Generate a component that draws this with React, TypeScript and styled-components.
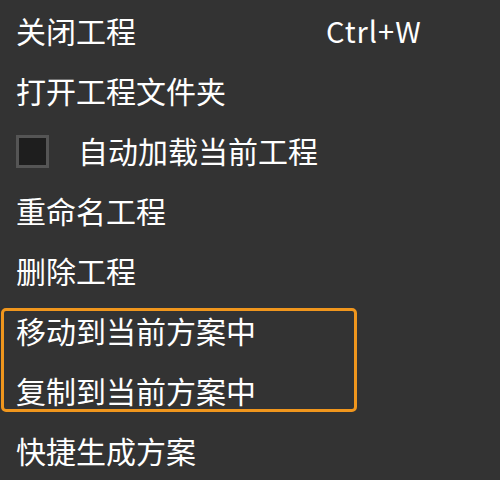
import React from "react"
import styled, { createGlobalStyle } from "styled-components"

const GlobalStyle = createGlobalStyle`
  html, body {
    margin: 0;
    padding: 0;
    background: #333333;
  }
`

const Menu = styled.div`
  width: 500px;
  height: 480px;
  overflow: hidden;
  padding-top: 1px;
  box-sizing: border-box;
  background: #333333;
  color: #ffffff;
  font-family: "Noto Sans CJK SC", "Noto Sans", sans-serif;
  font-size: 30px;
`

const Row = styled.div`
  display: flex;
  align-items: center;
  height: 60px;
  padding-left: 16px;
  padding-bottom: 3px;
  box-sizing: border-box;
  white-space: nowrap;
`

const Label = styled.span`
  flex: 0 0 auto;
  width: 310px;
`

const Shortcut = styled.span`
  font-size: 29px;
  letter-spacing: 1px;
`

const CheckBox = styled.span`
  width: 33px;
  height: 33px;
  box-sizing: border-box;
  border: 3px solid #555555;
  background: #1e1e1e;
  margin-right: 29px;
  margin-top: 3px;
  flex: 0 0 auto;
`

const Group = styled.div`
  position: relative;

  &::after {
    content: "";
    position: absolute;
    top: 7px;
    bottom: 9px;
    left: 1px;
    width: 356px;
    box-sizing: border-box;
    border: 3px solid #f0961d;
    border-radius: 5px;
    pointer-events: none;
  }
`

export default function App() {
  return (
    <Menu>
      <GlobalStyle />
      <Row>
        <Label>关闭工程</Label>
        <Shortcut>Ctrl+W</Shortcut>
      </Row>
      <Row>打开工程文件夹</Row>
      <Row>
        <CheckBox />
        自动加载当前工程
      </Row>
      <Row>重命名工程</Row>
      <Row>删除工程</Row>
      <Group>
        <Row>移动到当前方案中</Row>
        <Row>复制到当前方案中</Row>
      </Group>
      <Row>快捷生成方案</Row>
    </Menu>
  )
}
